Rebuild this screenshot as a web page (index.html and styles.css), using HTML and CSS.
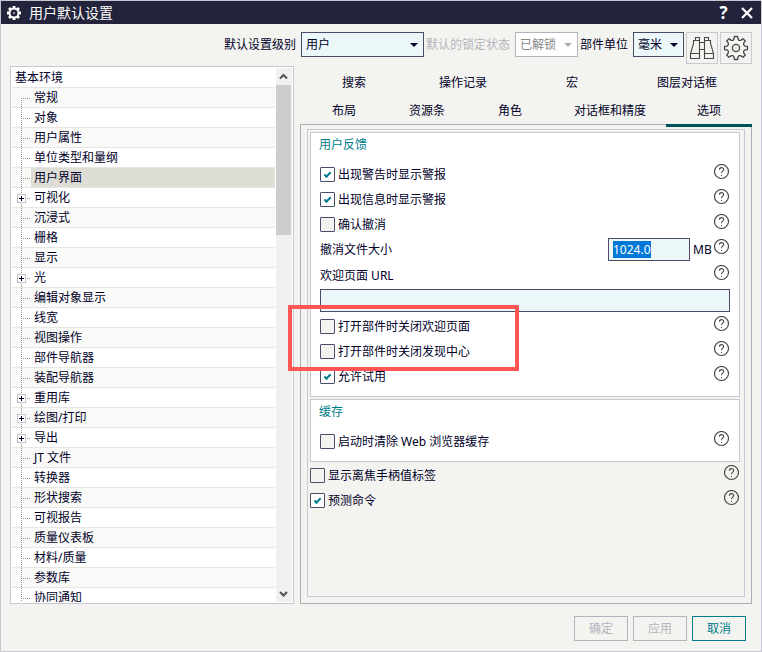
FILE: index.html
```
<!DOCTYPE html>
<html lang="zh-CN">
<head>
<meta charset="utf-8">
<title>用户默认设置</title>
<link rel="stylesheet" href="styles.css">
</head>
<body>
<svg class="sprite" aria-hidden="true">
  <symbol id="help" viewBox="0 0 16 16">
    <circle cx="7.5" cy="7.5" r="7" fill="none" stroke="currentColor" stroke-width="1.2"/>
    <path d="M5.4 5.8C5.4 2.9 9.7 3 9.7 5.5C9.7 7.2 7.5 7.2 7.5 9.2" fill="none" stroke="currentColor" stroke-width="1.1"/>
    <rect x="7" y="11" width="1" height="1" fill="currentColor"/>
  </symbol>
</svg>
<main class="window">
  <header class="titlebar">
    <svg class="title-gear" viewBox="0 0 14 14" aria-hidden="true">
      <circle cx="7" cy="7" r="4.5" fill="none" stroke="#fff" stroke-width="2"/>
      <path d="M7 0V2M7 12V14M0 7H2M12 7H14M2 2L3.6 3.6M10.4 10.4L12 12M12 2L10.4 3.6M3.6 10.4L2 12" stroke="#fff" stroke-width="2.8"/>
      <rect x="6.3" y="6.3" width="1.4" height="1.4" fill="#fff"/>
    </svg>
    <h1>用户默认设置</h1>
    <button type="button" class="title-btn" aria-label="帮助">?</button>
    <button type="button" class="title-btn" aria-label="关闭">
      <svg width="12" height="12" viewBox="0 0 12 12"><path d="M1 1L11 11M11 1L1 11" stroke="#fff" stroke-width="2.2"/></svg>
    </button>
  </header>

  <div class="toolbar">
    <label for="level">默认设置级别</label>
    <span class="pick level"><select id="level"><option>用户</option></select></span>
    <label for="lock" class="dim">默认的锁定状态</label>
    <span class="pick lock"><select id="lock" disabled><option>已解锁</option></select></span>
    <label for="unit">部件单位</label>
    <span class="pick unit"><select id="unit"><option>毫米</option></select></span>
    <button type="button" class="tool" aria-label="查找">
      <svg width="26" height="26" viewBox="0 0 26 26" fill="none" stroke="#464646" stroke-width="1.1">
        <path d="M6.5 5.5V2.5H10.5V5.5M15.5 5.5V2.5H19.5V5.5M4.5 5.5H10.5V23.5H1.5V18.5L4.5 8.5ZM15.5 5.5H21.5V8.5L24.5 18.5V23.5H15.5ZM1.5 18.5H10.5M15.5 18.5H24.5M10.5 7.5H15.5M10.5 14.5H15.5"/>
      </svg>
    </button>
    <button type="button" class="tool" aria-label="管理设置">
      <svg width="26" height="26" viewBox="0 0 26 26" fill="none" stroke="#464646" stroke-width="1.3" stroke-linejoin="round">
        <circle cx="13" cy="13" r="3.6"/>
        <path id="cog" d=""/>
      </svg>
    </button>
  </div>

  <div class="body">
    <nav class="tree" aria-label="类别">
      <ul id="tree"></ul>
      <div class="scroll" aria-hidden="true">
        <svg width="15" height="17" viewBox="0 0 15 17"><path d="M4 10.5L7.5 7L11 10.5" fill="none" stroke="#555" stroke-width="2"/></svg>
        <div class="track"><div class="thumb"></div></div>
        <svg width="15" height="17" viewBox="0 0 15 17"><path d="M4 7L7.5 10.5L11 7" fill="none" stroke="#555" stroke-width="2"/></svg>
      </div>
    </nav>

    <section class="settings">
      <div class="tabs tabs-back">
        <button type="button">搜索</button><button type="button">操作记录</button><button type="button">宏</button><button type="button">图层对话框</button>
      </div>
      <div class="tabs tabs-front">
        <button type="button">布局</button><button type="button">资源条</button><button type="button">角色</button><button type="button">对话框和精度</button><button type="button" class="active">选项</button>
      </div>
      <div class="page">
        <div class="page-inner">
          <section class="group">
            <h2>用户反馈</h2>
            <div class="row"><label><input type="checkbox" checked>出现警告时显示警报</label><button type="button" class="help" aria-label="帮助"><svg><use href="#help"/></svg></button></div>
            <div class="row"><label><input type="checkbox" checked>出现信息时显示警报</label><button type="button" class="help" aria-label="帮助"><svg><use href="#help"/></svg></button></div>
            <div class="row"><label><input type="checkbox">确认撤消</label><button type="button" class="help" aria-label="帮助"><svg><use href="#help"/></svg></button></div>
            <div class="row"><label for="undo">撤消文件大小</label><input class="text size" id="undo" type="text" value="1024.0"><span class="suffix">MB</span><button type="button" class="help" aria-label="帮助"><svg><use href="#help"/></svg></button></div>
            <div class="row url-row"><label for="url">欢迎页面 URL</label><button type="button" class="help" aria-label="帮助"><svg><use href="#help"/></svg></button></div>
            <input class="text url" id="url" type="text">
            <div class="marked">
              <div class="row"><label><input type="checkbox">打开部件时关闭欢迎页面</label><button type="button" class="help" aria-label="帮助"><svg><use href="#help"/></svg></button></div>
              <div class="row"><label><input type="checkbox">打开部件时关闭发现中心</label><button type="button" class="help" aria-label="帮助"><svg><use href="#help"/></svg></button></div>
            </div>
            <div class="row"><label><input type="checkbox" checked>允许试用</label><button type="button" class="help" aria-label="帮助"><svg><use href="#help"/></svg></button></div>
          </section>
          <section class="group">
            <h2>缓存</h2>
            <div class="row"><label><input type="checkbox">启动时清除 Web 浏览器缓存</label><button type="button" class="help" aria-label="帮助"><svg><use href="#help"/></svg></button></div>
          </section>
          <div class="loose">
            <div class="row"><label><input type="checkbox">显示离焦手柄值标签</label><button type="button" class="help" aria-label="帮助"><svg><use href="#help"/></svg></button></div>
            <div class="row"><label><input type="checkbox" checked>预测命令</label><button type="button" class="help" aria-label="帮助"><svg><use href="#help"/></svg></button></div>
          </div>
        </div>
      </div>
    </section>
  </div>

  <footer class="actions">
    <button type="button" disabled>确定</button>
    <button type="button" disabled>应用</button>
    <button type="button" class="cancel">取消</button>
  </footer>
</main>
<script src="script.js"></script>
</body>
</html>
```
FILE: styles.css
```
*, *::before, *::after { box-sizing: border-box; }

body {
  margin: 0;
  color: #000028;
  font: 12px/20px "Noto Sans", "Noto Sans CJK SC", sans-serif;
}

button, input, select { font: inherit; color: inherit; margin: 0; }
button { padding: 0; border: 0; background: none; }
h1, h2, ul { margin: 0; padding: 0; font-weight: normal; }
.sprite { position: absolute; width: 0; height: 0; }

.window {
  display: flex;
  flex-direction: column;
  min-height: 100vh;
  border: 1px solid #c8c8d2;
  background: #f3f3ef;
}

/* Title bar */
.titlebar {
  display: flex;
  align-items: center;
  height: 23px;
  padding: 0 8px 0 6px;
  color: #fff;
  background: #23233c;
}
.title-gear { width: 14px; height: 14px; margin-right: 8px; }
h1 { flex: 1; font-size: 14px; }
.title-btn {
  display: flex;
  align-items: center;
  justify-content: center;
  width: 13px;
  height: 20px;
  margin-left: 10px;
  font: bold 17px/20px "Open Sans", sans-serif;
}

/* Toolbar */
.toolbar {
  display: flex;
  justify-content: flex-end;
  height: 42px;
  padding: 8px 9px 0 0;
}
.toolbar label { line-height: 25px; }
.toolbar .dim { margin-left: 2px; color: #b4b4be; }
.pick { position: relative; height: 25px; margin-left: 5px; }
.pick::after {
  position: absolute;
  top: 11px;
  right: 6px;
  border: 4px solid transparent;
  border-top-color: #000028;
  border-bottom: 0;
  content: "";
  pointer-events: none;
}
.pick select {
  display: block;
  width: 100%;
  height: 25px;
  padding: 0 4px;
  border: 1px solid #4c4c68;
  border-radius: 0;
  background: #ebf7f8;
  appearance: none;
}
.pick select:disabled { border-color: #b4b4be; color: #868686; background: #fff; opacity: 1; }
.level { width: 123px; }
.lock { width: 63px; margin-right: 2px; }
.lock::after { border-top-color: #aaaab8; }
.unit { width: 51px; }
.tool {
  display: flex;
  align-items: center;
  justify-content: center;
  width: 32px;
  height: 32px;
  margin-left: 2px;
  border: 1px solid #c8c8d2;
}

/* Main area */
.body {
  flex: 1;
  display: grid;
  grid-template-columns: 284fr 452fr;
  gap: 6px;
  padding: 0 9px;
}

.tree {
  display: flex;
  height: 538px;
  padding: 1px;
  border: 1px solid #c8c8d2;
  background: #fff;
}
.tree ul { flex: 1; overflow: hidden; list-style: none; }
.tree li {
  display: flex;
  height: 20px;
  border-bottom: 1px solid #e6e6e2;
  line-height: 19px;
}
.tree li:nth-child(even) { background: #f9f9f7; }
.tree .root { padding-left: 3px; }
.tree .lines { flex: none; width: 19px; height: 20px; }
.tree a { flex: 1; padding-left: 3px; color: inherit; text-decoration: none; }
.tree .current { background: #deded6; }

.scroll { display: flex; flex-direction: column; width: 16px; margin-left: 1px; background: #f0f0f0; }
.track { flex: 1; }
.thumb { width: 15px; height: 30%; background: #cdcdcd; }

.settings { display: flex; flex-direction: column; height: 538px; }
.tabs { display: grid; height: 28px; }
.tabs button { padding-top: 1px; }
.tabs-back { grid-template-columns: 108fr 110fr 108fr 122fr; height: 30px; padding: 2px 4px 0 0; }
.tabs-front { grid-template-columns: 88fr 78fr 88fr 112fr 86fr; }
.tabs .active { position: relative; box-shadow: 0 3px #00525a; }

.page { flex: 1; padding: 4px 6px 6px; border: 1px solid #adadb8; }
.page-inner { height: 100%; padding: 2px 4px 0 2px; border: 1px solid #c8c8d2; }
.group {
  margin-bottom: 2px;
  padding: 2px 9px 7px;
  border: 1px solid #c8c8d2;
  background: #fff;
}
.group h2 { margin: 0 0 7px -1px; color: #007d8c; font-size: 12px; }
.row { display: flex; align-items: center; height: 25px; }
.row label { display: flex; align-items: center; flex: 1; }
.url-row { height: 27px; }
.loose { margin-top: -1px; }

input[type="checkbox"] {
  display: grid;
  place-content: center;
  width: 15px;
  height: 15px;
  margin-right: 3px;
  border: 1px solid #4c4c68;
  border-radius: 1px;
  background: #f3f3ef;
  appearance: none;
}
input[type="checkbox"]:checked { background: #fff; }
input[type="checkbox"]:checked::before {
  width: 7px;
  height: 4px;
  margin-top: -2px;
  border: solid #007d8c;
  border-width: 0 0 2px 2px;
  transform: rotate(-45deg);
  content: "";
}

.text {
  height: 23px;
  padding: 0 4px;
  border: 1px solid #4c4c68;
  border-radius: 0;
  outline: 0;
  background: #ebf7f8;
}
.text::selection { color: #fff; background: #0078d7; }
.size { width: 82px; }
.suffix { width: 24px; padding-left: 3px; }
.url { display: block; width: 100%; margin-bottom: 2px; }

.help { width: 16px; height: 16px; margin-bottom: 6px; color: #464646; }
.help svg { display: block; width: 16px; height: 16px; }

/* Outline around the two closing options */
.marked { position: relative; }
.marked::after {
  position: absolute;
  top: -9px;
  left: -32px;
  width: 231px;
  height: 66px;
  border: 4px solid #ff5555;
  border-radius: 1px;
  content: "";
  pointer-events: none;
}

/* Footer */
.actions { display: flex; justify-content: flex-end; gap: 5px; padding: 12px 15px 10px; }
.actions button { width: 54px; height: 25px; border: 1px solid #b4b4be; color: #b4b4be; }
.actions .cancel { border-color: #007d8c; color: #007d8c; }
```
FILE: script.js
```
const nodes = ["常规", "对象", "用户属性", "单位类型和量纲", "用户界面", "+可视化", "沉浸式", "栅格", "显示",
  "+光", "编辑对象显示", "线宽", "视图操作", "部件导航器", "装配导航器", "+重用库", "+绘图/打印", "+导出",
  "JT 文件", "转换器", "形状搜索", "可视报告", "质量仪表板", "材料/质量", "参数库", "协同通知"];

const tree = document.getElementById("tree");
tree.innerHTML = '<li class="root">基本环境</li>' + nodes.map((text, i) => {
  const branch = text[0] === "+";
  const name = branch ? text.slice(1) : text;
  const box = branch
    ? '<rect x="5.5" y="6.5" width="8" height="8" fill="#fff" stroke="#c3c3cd"/><path d="M7 10.5H12M9.5 8V13" stroke="#000028"/>'
    : "";
  return `<li><svg class="lines" viewBox="0 0 19 20"><path d="M9.5 ${i ? 0 : 10}V20M11 10.5H19" stroke="#969696" stroke-dasharray="1 1"/>${box}</svg>` +
    `<a href="#"${name === "用户界面" ? ' class="current"' : ""}>${name}</a></li>`;
}).join("");

/* Gear outline: eight teeth with slightly curved valleys between them */
let outline = "";
const at = (degrees, r) => {
  const a = degrees * Math.PI / 180;
  return `${(13 + r * Math.sin(a)).toFixed(2)} ${(13 - r * Math.cos(a)).toFixed(2)}`;
};
for (let i = 0; i < 8; i++) {
  const c = i * 45;
  outline += `${i ? "L" : "M"}${at(c - 8, 11.6)}L${at(c + 8, 11.6)}L${at(c + 12, 9.4)}Q${at(c + 22.5, 7.4)} ${at(c + 33, 9.4)}`;
}
document.getElementById("cog").setAttribute("d", `${outline}Z`);

const undo = document.getElementById("undo");
undo.focus();
undo.select();
```
